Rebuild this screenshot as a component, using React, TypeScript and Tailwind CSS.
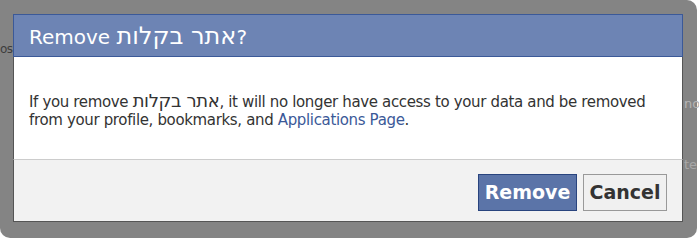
import React from 'react';

const font = { fontFamily: '"DejaVu Sans", "Liberation Sans", sans-serif' };

const RemoveAppDialog = () => {
  return (
    <div className="w-[699px] h-[240px] bg-white overflow-hidden" style={font}>
      {/* translucent frame round the dialog */}
      <div className="relative w-[697px] h-[238px] bg-[#848484] rounded-[10px] rounded-tl-none pl-[13px] pr-[14px] pt-[14px] pb-[16px]">
        {/* page text showing through the frame */}
        <span className="absolute left-0 top-[40px] text-[12px] text-[#3d3d3d] tracking-[-0.5px]">os</span>
        <span className="absolute left-[684px] top-[94px] text-[13px] text-[#b5b5b5]">no</span>
        <span className="absolute left-[684px] top-[155px] text-[13px] text-[#a8a8a8]">te</span>

        <div className="relative flex flex-col w-[670px] h-[208px]">
          <div className="h-[43px] bg-[#6d84b4] border border-[#3b5998] flex items-center pl-[15px]">
            <h2 className="text-[20px] text-white leading-none">
              Remove <span className="text-[1.2em]">אתר בקלות</span>?
            </h2>
          </div>

          <div className="bg-white border-x border-[#555] pl-[15px] pt-[35px] pb-[30px]">
            <p className="text-[15px] leading-[18px] text-[#333] tracking-[-0.35px]">
              If you remove <span className="text-[1.2em]">אתר בקלות</span>, it will no longer have access to your data and be removed
              <br />
              from your profile, bookmarks, and{' '}
              <a href="#" className="text-[#3b5998]">Applications Page</a>.
            </p>
          </div>

          <div className="flex-1 bg-[#f2f2f2] border-t border-t-[#ccc] border-x border-b border-[#555] flex justify-end items-start pt-[14px] pr-[15px] gap-[6px]">
            <button className="w-[99px] h-[37px] bg-[#5b74a8] border border-[#29447e] text-white text-[19px] font-bold">
              Remove
            </button>
            <button className="w-[84px] h-[37px] bg-[#f0f0f0] border border-[#999] text-[#333] text-[19px] font-bold">
              Cancel
            </button>
          </div>
        </div>
      </div>
    </div>
  );
};

export default function App() {
  return <RemoveAppDialog />;
}
